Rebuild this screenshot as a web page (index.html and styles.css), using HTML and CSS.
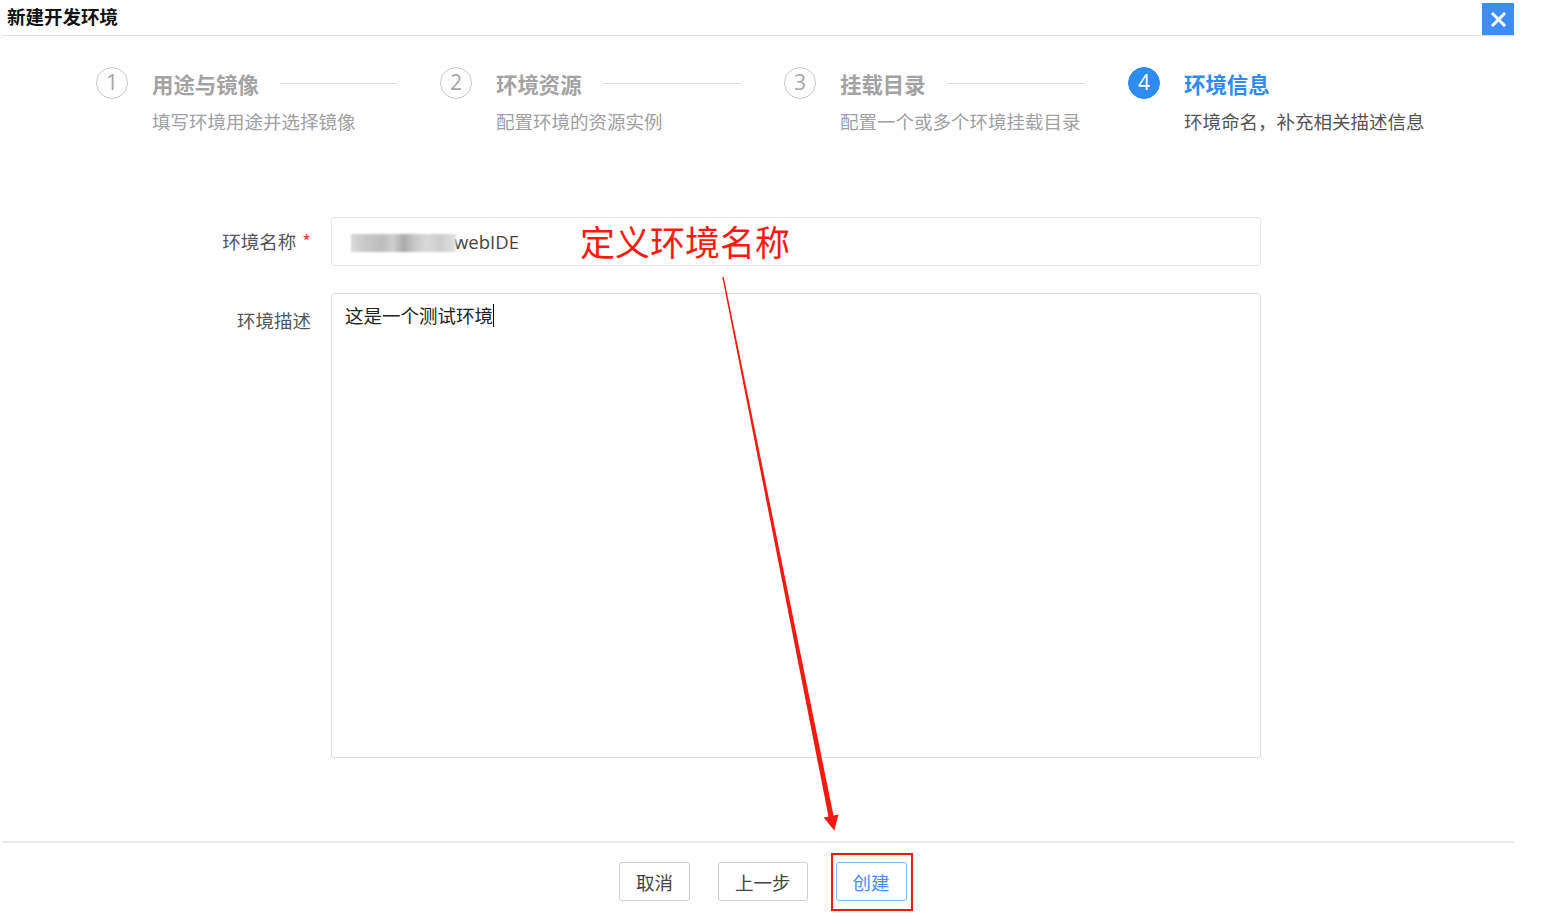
FILE: index.html
```html
<!DOCTYPE html>
<html lang="zh-CN">
<head>
<meta charset="utf-8">
<title>新建开发环境</title>
<link rel="stylesheet" href="styles.css">
</head>
<body>
<div class="dialog">
  <div class="dialog-header">
    <div class="dialog-title">新建开发环境</div>
    <button class="close-btn" aria-label="关闭">
      <svg width="15" height="15" viewBox="0 0 15 15"><path d="M2 2 L13 13 M13 2 L2 13" stroke="#fff" stroke-width="3" stroke-linecap="square"/></svg>
    </button>
  </div>

  <div class="steps">
    <div class="step">
      <div class="step-icon">1</div>
      <div class="step-body">
        <div class="step-head"><span class="step-title">用途与镜像</span><span class="step-line"></span></div>
        <div class="step-desc">填写环境用途并选择镜像</div>
      </div>
    </div>
    <div class="step">
      <div class="step-icon">2</div>
      <div class="step-body">
        <div class="step-head"><span class="step-title">环境资源</span><span class="step-line"></span></div>
        <div class="step-desc">配置环境的资源实例</div>
      </div>
    </div>
    <div class="step">
      <div class="step-icon">3</div>
      <div class="step-body">
        <div class="step-head"><span class="step-title">挂载目录</span><span class="step-line"></span></div>
        <div class="step-desc">配置一个或多个环境挂载目录</div>
      </div>
    </div>
    <div class="step step-active">
      <div class="step-icon">4</div>
      <div class="step-body">
        <div class="step-head"><span class="step-title">环境信息</span></div>
        <div class="step-desc">环境命名，补充相关描述信息</div>
      </div>
    </div>
  </div>

  <div class="form">
    <div class="form-row row-name">
      <label class="form-label">环境名称<span class="req">*</span></label>
      <div class="form-field">
        <div class="input">
          <span class="blur"></span><span class="input-text">webIDE</span>
          <span class="note">定义环境名称</span>
        </div>
      </div>
    </div>
    <div class="form-row row-desc">
      <label class="form-label label-top">环境描述</label>
      <div class="form-field">
        <div class="textarea"><span>这是一个测试环境</span><span class="caret"></span></div>
      </div>
    </div>
  </div>

  <div class="dialog-footer">
    <button class="btn">取消</button>
    <button class="btn">上一步</button>
    <span class="btn-wrap">
      <button class="btn btn-primary">创建</button>
      <span class="mark-box"></span>
    </span>
  </div>
</div>

<svg class="arrow" width="1550" height="924" viewBox="0 0 1550 924">
  <polygon points="722.3,277.1 723.7,276.9 833.5,815.5 838.5,814.4 834.3,830.5 823.6,817.6 828.5,816.5" fill="#f41a10"/>
</svg>
</body>
</html>
```

FILE: styles.css
```css
* { box-sizing: border-box; }

html, body {
  margin: 0;
  padding: 0;
  background: #fff;
}

body {
  font-family: "Noto Sans CJK SC", "Noto Sans", "Liberation Sans", sans-serif;
  color: #333;
  position: relative;
  width: 1550px;
  height: 924px;
  overflow: hidden;
}

.dialog {
  width: 1512px;
  margin-left: 2px;
}

.dialog-header {
  height: 36px;
  display: flex;
  justify-content: space-between;
  align-items: flex-start;
  border-bottom: 1px solid #e4e4e4;
}

.dialog-title {
  padding-left: 5px;
  font-size: 18.5px;
  font-weight: 700;
  line-height: 33px;
  color: #111;
}

.close-btn {
  margin-top: 3px;
  width: 32px;
  height: 32px;
  border: none;
  padding: 0;
  background: #3c8ef5;
  display: flex;
  align-items: center;
  justify-content: center;
}

.steps {
  display: flex;
  padding: 31px 0 0 94px;
}

.step {
  display: flex;
  width: 344px;
}

.step-icon {
  flex: none;
  width: 32px;
  height: 32px;
  border: 1px solid #c8c8c8;
  border-radius: 50%;
  font-family: "Open Sans", "Liberation Sans", sans-serif;
  font-size: 21px;
  line-height: 28px;
  text-align: center;
  color: #a5a5a5;
}

.step-body {
  flex: 1;
  margin-left: 24px;
}

.step-head {
  display: flex;
  align-items: center;
  height: 33px;
}

.step-title {
  font-size: 21.4px;
  font-weight: 700;
  color: #a3a3a3;
  white-space: nowrap;
}

.step-line {
  flex: 1;
  height: 1px;
  background: #dedede;
  margin: 0 43px 0 21px;
}

.step-desc {
  margin-top: 8px;
  font-size: 18.5px;
  line-height: 26px;
  color: #a0a0a0;
  white-space: nowrap;
}

.step-active .step-icon {
  background: #2e8cf0;
  border-color: #2e8cf0;
  color: #fff;
}

.step-active .step-title { color: #2e8cf0; }
.step-active .step-desc { color: #555; }

.form {
  margin-top: 83px;
}

.form-row {
  display: flex;
}

.row-desc { margin-top: 27px; }

.form-label {
  width: 329px;
  padding-right: 20px;
  text-align: right;
  font-size: 18.5px;
  color: #555;
  line-height: 49px;
}

.label-top {
  line-height: 26px;
  padding-top: 14px;
}

.req {
  color: #e8433a;
  margin-left: 6px;
}

.form-field {
  width: 930px;
}

.input {
  position: relative;
  height: 49px;
  border: 1px solid #e6e6e6;
  border-radius: 3px;
  display: flex;
  align-items: center;
  padding-left: 19px;
  font-family: "Open Sans", "Noto Sans", "Liberation Sans", sans-serif;
  font-size: 18.5px;
  color: #444;
}

.blur {
  width: 105px;
  height: 18px;
  margin-top: 2px;
  background: linear-gradient(90deg, #d8d8d8 0, #c9c9c9 12%, #bdbdbd 30%, #cfcfcf 40%, #aaaaaa 50%, #c6c6c6 60%, #d9d9d9 72%, #cdcdcd 85%, #e2e2e2 100%);
  filter: blur(1.2px);
}

.input-text {
  margin-left: -2px;
}

.note {
  position: absolute;
  left: 248px;
  top: 1px;
  font-family: "Noto Sans CJK SC", sans-serif;
  font-size: 35px;
  line-height: 44px;
  color: #ff1a10;
}

.textarea {
  height: 465px;
  border: 1px solid #dcdcdc;
  border-radius: 3px;
  padding: 8px 13px;
  font-size: 18.5px;
  line-height: 26px;
  color: #222;
  display: flex;
  align-items: flex-start;
}

.caret {
  width: 1px;
  height: 23px;
  margin-top: 2px;
  background: #000;
}

.dialog-footer {
  margin-top: 83px;
  border-top: 2px solid #e8e8e8;
  padding: 19px 0 0 617px;
  display: flex;
  gap: 28px;
}

.btn {
  height: 39px;
  padding: 0 16px;
  border: 1px solid #cfcfcf;
  border-radius: 3px;
  background: #fff;
  font-family: "Noto Sans CJK SC", sans-serif;
  font-size: 18.5px;
  color: #444;
  white-space: nowrap;
}

.btn-wrap {
  position: relative;
  display: flex;
}

.btn-primary {
  border-color: #86b4f8;
  color: #4a8df5;
}

.mark-box {
  position: absolute;
  left: -5px;
  right: -6px;
  top: -9px;
  bottom: -10px;
  border: 2px solid #f01810;
}

.arrow {
  position: absolute;
  left: 0;
  top: 0;
  pointer-events: none;
}
```
